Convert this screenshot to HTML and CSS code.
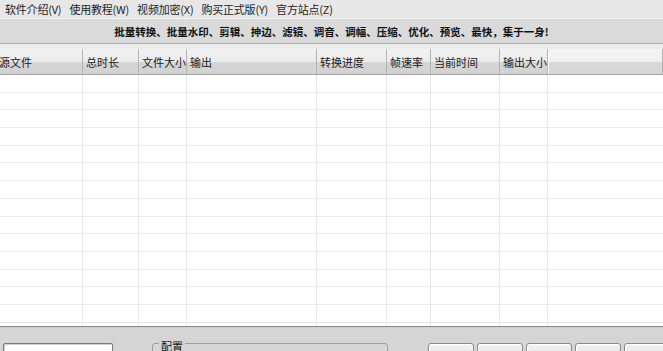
FILE: index.html
```html
<!DOCTYPE html>
<html lang="zh-CN">
<head>
<meta charset="utf-8">
<title>视频转换</title>
<link rel="stylesheet" href="styles.css">
</head>
<body>
<div class="app">
  <div class="menubar">
    <span class="menu-item">软件介绍(V)</span>
    <span class="menu-item">使用教程(W)</span>
    <span class="menu-item">视频加密(X)</span>
    <span class="menu-item">购买正式版(Y)</span>
    <span class="menu-item">官方站点(Z)</span>
  </div>
  <div class="banner">批量转换、批量水印、剪辑、抻边、滤镜、调音、调幅、压缩、优化、预览、最快，集于一身!</div>
  <div class="spacer"></div>
  <div class="grid">
    <div class="head">
      <div class="cell c1">源文件</div>
      <div class="cell c2">总时长</div>
      <div class="cell c3">文件大小</div>
      <div class="cell c4">输出</div>
      <div class="cell c5">转换进度</div>
      <div class="cell c6">帧速率</div>
      <div class="cell c7">当前时间</div>
      <div class="cell c8">输出大小</div>
      <div class="cell fill"></div>
    </div>
    <div class="body">
      <div class="row"><div class="cell c1"></div><div class="cell c2"></div><div class="cell c3"></div><div class="cell c4"></div><div class="cell c5"></div><div class="cell c6"></div><div class="cell c7"></div><div class="cell c8"></div><div class="cell fill"></div></div>
      <div class="row"><div class="cell c1"></div><div class="cell c2"></div><div class="cell c3"></div><div class="cell c4"></div><div class="cell c5"></div><div class="cell c6"></div><div class="cell c7"></div><div class="cell c8"></div><div class="cell fill"></div></div>
      <div class="row"><div class="cell c1"></div><div class="cell c2"></div><div class="cell c3"></div><div class="cell c4"></div><div class="cell c5"></div><div class="cell c6"></div><div class="cell c7"></div><div class="cell c8"></div><div class="cell fill"></div></div>
      <div class="row"><div class="cell c1"></div><div class="cell c2"></div><div class="cell c3"></div><div class="cell c4"></div><div class="cell c5"></div><div class="cell c6"></div><div class="cell c7"></div><div class="cell c8"></div><div class="cell fill"></div></div>
      <div class="row"><div class="cell c1"></div><div class="cell c2"></div><div class="cell c3"></div><div class="cell c4"></div><div class="cell c5"></div><div class="cell c6"></div><div class="cell c7"></div><div class="cell c8"></div><div class="cell fill"></div></div>
      <div class="row"><div class="cell c1"></div><div class="cell c2"></div><div class="cell c3"></div><div class="cell c4"></div><div class="cell c5"></div><div class="cell c6"></div><div class="cell c7"></div><div class="cell c8"></div><div class="cell fill"></div></div>
      <div class="row"><div class="cell c1"></div><div class="cell c2"></div><div class="cell c3"></div><div class="cell c4"></div><div class="cell c5"></div><div class="cell c6"></div><div class="cell c7"></div><div class="cell c8"></div><div class="cell fill"></div></div>
      <div class="row"><div class="cell c1"></div><div class="cell c2"></div><div class="cell c3"></div><div class="cell c4"></div><div class="cell c5"></div><div class="cell c6"></div><div class="cell c7"></div><div class="cell c8"></div><div class="cell fill"></div></div>
      <div class="row"><div class="cell c1"></div><div class="cell c2"></div><div class="cell c3"></div><div class="cell c4"></div><div class="cell c5"></div><div class="cell c6"></div><div class="cell c7"></div><div class="cell c8"></div><div class="cell fill"></div></div>
      <div class="row"><div class="cell c1"></div><div class="cell c2"></div><div class="cell c3"></div><div class="cell c4"></div><div class="cell c5"></div><div class="cell c6"></div><div class="cell c7"></div><div class="cell c8"></div><div class="cell fill"></div></div>
      <div class="row"><div class="cell c1"></div><div class="cell c2"></div><div class="cell c3"></div><div class="cell c4"></div><div class="cell c5"></div><div class="cell c6"></div><div class="cell c7"></div><div class="cell c8"></div><div class="cell fill"></div></div>
      <div class="row"><div class="cell c1"></div><div class="cell c2"></div><div class="cell c3"></div><div class="cell c4"></div><div class="cell c5"></div><div class="cell c6"></div><div class="cell c7"></div><div class="cell c8"></div><div class="cell fill"></div></div>
      <div class="row"><div class="cell c1"></div><div class="cell c2"></div><div class="cell c3"></div><div class="cell c4"></div><div class="cell c5"></div><div class="cell c6"></div><div class="cell c7"></div><div class="cell c8"></div><div class="cell fill"></div></div>
      <div class="row"><div class="cell c1"></div><div class="cell c2"></div><div class="cell c3"></div><div class="cell c4"></div><div class="cell c5"></div><div class="cell c6"></div><div class="cell c7"></div><div class="cell c8"></div><div class="cell fill"></div></div>
      <div class="row"><div class="cell c1"></div><div class="cell c2"></div><div class="cell c3"></div><div class="cell c4"></div><div class="cell c5"></div><div class="cell c6"></div><div class="cell c7"></div><div class="cell c8"></div><div class="cell fill"></div></div>
    </div>
  </div>
  <div class="panel">
    <div class="textbox"></div>
    <fieldset class="group"><legend class="group-label">配置</legend></fieldset>
    <div class="buttons">
      <div class="btn"></div>
      <div class="btn"></div>
      <div class="btn"></div>
      <div class="btn"></div>
      <div class="btn"></div>
    </div>
  </div>
</div>
</body>
</html>
```

FILE: styles.css
```css
* { box-sizing: border-box; }
html, body {
  margin: 0;
  padding: 0;
  background: #d6d6d6;
  overflow: hidden;
}
.app {
  width: 663px;
  height: 351px;
  overflow: hidden;
  font-family: "Noto Sans CJK SC", "Liberation Sans", sans-serif;
  font-size: 11px;
  color: #1e1e1e;
  display: flex;
  flex-direction: column;
}
.menubar {
  height: 19px;
  background: #e7e7e7;
  border-bottom: 1px solid #f7f7f7;
  display: flex;
  align-items: center;
  gap: 8px;
  padding-left: 5px;
  line-height: 1;
  flex: none;
}
.menu-item { white-space: nowrap; letter-spacing: -0.2px; }
.banner {
  height: 25px;
  background: #dadada;
  border-bottom: 1px solid #a9a9a9;
  display: flex;
  align-items: center;
  justify-content: center;
  font-size: 10.5px;
  font-weight: 700;
  color: #111;
  white-space: nowrap;
  flex: none;
}
.spacer {
  height: 5px;
  background: #ececec;
  flex: none;
}
.grid {
  margin-left: -4px;
  width: 667px;
  flex: none;
  background: #fff;
  border-bottom: 1px solid #8e8e8e;
}
.head {
  display: flex;
  height: 26px;
  background: linear-gradient(#f1f1f1 0, #ebebeb 50%, #d5d5d5 52%, #d2d2d2 100%);
  border-bottom: 1px solid #a4a4a4;
}
.head .cell {
  display: flex;
  align-items: center;
  padding-left: 3px;
  border-right: 1px solid #b3b3b3;
  white-space: nowrap;
  color: #1a1a1a;
}
.head .fill {
  background: linear-gradient(#f3f3f3 0, #efefef 50%, #d8d8d8 52%, #d6d6d6 100%);
  border-left: 1px solid #fff;
}
.c1 { width: 87px; }
.c2 { width: 56px; }
.c3 { width: 48px; }
.c4 { width: 130px; }
.c5 { width: 70px; }
.c6 { width: 44px; }
.c7 { width: 69px; }
.c8 { width: 48px; }
.cell { flex: none; }
.fill { flex: 1; }
.body {
  height: 251px;
  overflow: hidden;
}
.row {
  display: flex;
  height: 17.7px;
  border-bottom: 1px solid #ebebeb;
}
.row .cell {
  border-right: 1px solid #e6e6e6;
}
.row .fill { border-right: none; }
.panel {
  flex: 1;
  background: #d5d5d5;
  display: flex;
  align-items: flex-start;
  padding-top: 15px;
  border-top: 1px solid #cfcfcf;
}
.textbox {
  margin-left: 3px;
  width: 110px;
  height: 20px;
  background: #fff;
  border: 1px solid #7a7a7a;
  border-radius: 2px;
  box-shadow: inset 1px 1px 0 #d0d0d0;
  flex: none;
}
.group {
  margin: -9px 0 0 39px;
  width: 236px;
  height: 30px;
  padding: 0;
  border: 1px solid #9c9c9c;
  border-radius: 3px;
  flex: none;
}
.group-label {
  margin-left: 6px;
  padding: 6px 2px 0;
  line-height: 12px;
  font-size: 11px;
  color: #111;
}
.buttons {
  margin-left: 40px;
  display: flex;
  gap: 3px;
  flex: none;
}
.btn {
  width: 46px;
  height: 22px;
  border: 1px solid #8a8a8a;
  border-radius: 3px;
  background: linear-gradient(#f2f2f2, #dedede);
  box-shadow: inset 1px 1px 0 #fff;
}
```
